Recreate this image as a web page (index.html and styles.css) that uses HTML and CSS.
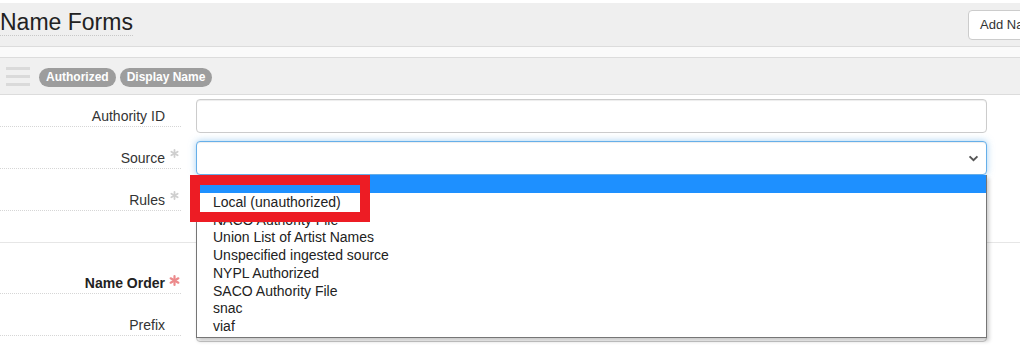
FILE: index.html
```html
<!DOCTYPE html>
<html lang="en">
<head>
  <meta charset="UTF-8">
  <meta name="viewport" content="width=device-width, initial-scale=1.0">
  <title>Name Forms</title>
  <link rel="stylesheet" href="styles.css">
</head>
<body>
  <div class="section-head">
    <h2 class="section-title"><span>Name Forms</span></h2>
    <button class="add-btn">Add Name Form</button>
  </div>
  <div class="spacer"></div>

  <div class="subform">
    <div class="subform-bar">
      <span class="drag-handle"><i></i><i></i><i></i></span>
      <span class="badge">Authorized</span>
      <span class="badge">Display Name</span>
    </div>

    <div class="form-body">
      <div class="form-row">
        <label class="form-label">Authority ID<span class="req"></span></label>
        <div class="form-field">
          <div class="text-input"></div>
        </div>
      </div>

      <div class="form-row">
        <label class="form-label">Source<span class="req">
          <svg viewBox="0 0 10 10" width="9" height="9"><g stroke="#cfcfcf" stroke-width="2" stroke-linecap="round"><path d="M5 1v8"/><path d="M1.5 3l7 4"/><path d="M8.5 3l-7 4"/></g></svg>
        </span></label>
        <div class="form-field">
          <div class="text-input select-box focused">
            <svg viewBox="0 0 12 8" width="11" height="7"><path d="M1.5 1.5L6 6l4.5-4.5" fill="none" stroke="#555" stroke-width="2.2"/></svg>
          </div>
          <ul class="dropdown">
            <li class="selected">&nbsp;</li>
            <li>Local (unauthorized)</li>
            <li>NACO Authority File</li>
            <li>Union List of Artist Names</li>
            <li>Unspecified ingested source</li>
            <li>NYPL Authorized</li>
            <li>SACO Authority File</li>
            <li>snac</li>
            <li>viaf</li>
          </ul>
          <div class="callout"></div>
        </div>
      </div>

      <div class="form-row">
        <label class="form-label">Rules<span class="req">
          <svg viewBox="0 0 10 10" width="9" height="9"><g stroke="#cfcfcf" stroke-width="2" stroke-linecap="round"><path d="M5 1v8"/><path d="M1.5 3l7 4"/><path d="M8.5 3l-7 4"/></g></svg>
        </span></label>
        <div class="form-field">
          <div class="text-input select-box"></div>
        </div>
      </div>

      <div class="section-divider"></div>

      <div class="form-row">
        <label class="form-label strong">Name Order<span class="req">
          <svg viewBox="0 0 10 10" width="11" height="11"><g stroke="#ec8a8c" stroke-width="2" stroke-linecap="round"><path d="M5 1v8"/><path d="M1.5 3l7 4"/><path d="M8.5 3l-7 4"/></g></svg>
        </span></label>
        <div class="form-field">
          <div class="text-input select-box"></div>
        </div>
      </div>

      <div class="form-row">
        <label class="form-label">Prefix<span class="req"></span></label>
        <div class="form-field">
          <div class="text-input"></div>
        </div>
      </div>
    </div>
  </div>
</body>
</html>
```

FILE: styles.css
```css
html, body {
  overflow: hidden;
}
body {
  margin: 0;
  background-color: #fff;
  color: #333;
  font-family: "Liberation Sans", Arial, sans-serif;
  font-size: 14px;
}

.section-head {
  display: flex;
  align-items: flex-start;
  margin-top: 3px;
  height: 44px;
  box-sizing: border-box;
  padding-top: 6px;
  background-color: #efefef;
  border-bottom: 1px solid #dcdcdc;
}
.section-title {
  flex: 0 0 968px;
  margin: 0;
  font-size: 23px;
  font-weight: normal;
  line-height: 26px;
  color: #222;
}
.section-title span {
  border-bottom: 1px dotted #c8c8c8;
}
.add-btn {
  flex-shrink: 0;
  margin-top: 1px;
  padding: 6px 11px;
  font-family: inherit;
  font-size: 13px;
  line-height: 16px;
  color: #333;
  background-color: #fff;
  border: 1px solid #ccc;
  border-radius: 4px;
  white-space: nowrap;
}

.spacer {
  height: 10px;
  background-color: #fafafa;
}

.subform-bar {
  display: flex;
  align-items: center;
  gap: 4px;
  height: 38px;
  box-sizing: border-box;
  padding: 3px 6px 0;
  background-color: #f0f0f0;
  border-top: 1px solid #dcdcdc;
  border-bottom: 1px solid #dcdcdc;
}
.drag-handle {
  display: flex;
  flex-direction: column;
  gap: 5px;
  width: 24px;
  margin-right: 5px;
  margin-top: -2px;
}
.drag-handle i {
  display: block;
  height: 3px;
  background-color: #dadada;
}
.badge {
  display: inline-block;
  padding: 0 7px;
  height: 19px;
  line-height: 19px;
  border-radius: 10px;
  background-color: #9d9d9d;
  color: #fff;
  font-size: 12px;
  font-weight: bold;
}

.form-body {
  padding-top: 4px;
}
.form-row {
  display: flex;
  margin-bottom: 8px;
}
.form-label {
  display: flex;
  justify-content: flex-end;
  align-items: flex-start;
  width: 181px;
  height: 28px;
  box-sizing: border-box;
  padding-top: 7px;
  line-height: 20px;
  border-bottom: 1px dotted #d6d6d6;
}
.form-label.strong {
  font-weight: bold;
  color: #222;
}
.req {
  display: flex;
  width: 16px;
  padding-left: 5px;
  box-sizing: border-box;
  padding-top: 1px;
}
.form-label.strong .req {
  padding-left: 4px;
  padding-top: 2px;
}
.form-field {
  position: relative;
  flex: 1;
  margin-left: 15px;
  margin-right: 33px;
}
.text-input {
  height: 34px;
  box-sizing: border-box;
  border: 1px solid #ccc;
  border-radius: 4px;
  box-shadow: inset 0 1px 1px rgba(0, 0, 0, 0.075);
  background-color: #fff;
}
.select-box {
  display: flex;
  align-items: center;
  justify-content: flex-end;
  padding-right: 7px;
  padding-top: 1px;
}
.select-box.focused {
  border-color: #66afe9;
  box-shadow: inset 0 1px 1px rgba(0, 0, 0, 0.075), 0 0 7px rgba(102, 175, 233, 0.6);
}

.section-divider {
  margin: 25px 0 23px;
  border-top: 1px solid #e6e6e6;
}

.dropdown {
  position: absolute;
  top: 34px;
  left: 0;
  right: 0;
  z-index: 10;
  margin: 0;
  padding: 0 0 2px;
  list-style: none;
  background-color: #fff;
  border: 1px solid #767676;
  border-top: none;
  box-shadow: 2px 3px 4px rgba(0, 0, 0, 0.22);
}
.dropdown li {
  padding-left: 16px;
  padding-top: 2px;
  line-height: 15.75px;
  color: #222;
}
.dropdown li.selected {
  background-color: #1e90ff;
}

.callout {
  position: absolute;
  top: 34px;
  left: -6px;
  z-index: 20;
  width: 160px;
  height: 27px;
  border: 10px solid #ed1c24;
}
```
